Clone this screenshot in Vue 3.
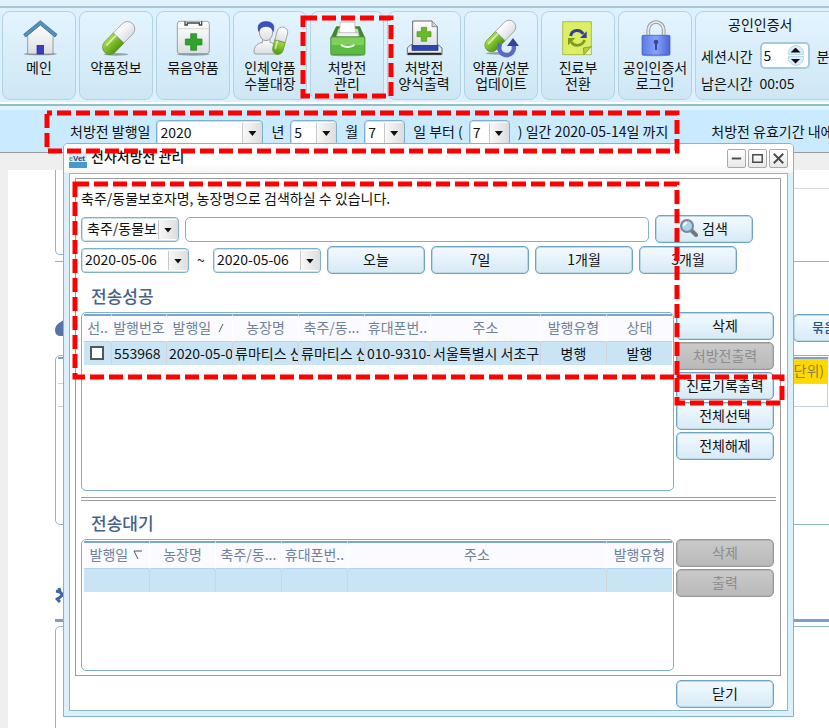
<template>
  <div class="app">
    <header class="toolbar">
      <button v-for="item in menu" :key="item.icon" type="button" class="tool">
        <svg class="tool-icon" viewBox="0 0 108 108" aria-hidden="true">
          <g v-if="item.icon === 'home'">
            <defs>
              <linearGradient id="green" x1="0" y1="0" x2="0" y2="1">
                <stop offset="0" stop-color="#a6dc3c" />
                <stop offset="1" stop-color="#4f9a10" />
              </linearGradient>
              <linearGradient id="white" x1="0" y1="0" x2="0" y2="1">
                <stop offset="0" stop-color="#ffffff" />
                <stop offset="1" stop-color="#dcdfe2" />
              </linearGradient>
              <linearGradient id="blue" x1="0" y1="0" x2="1" y2="0">
                <stop offset="0" stop-color="#5c79e0" />
                <stop offset="0.5" stop-color="#86a4fa" />
                <stop offset="1" stop-color="#4a66d4" />
              </linearGradient>
            </defs>
            <ellipse cx="58" cy="102" rx="50" ry="4" fill="#8fa3ae" />
            <path d="M20 46 58 12 96 46V102H20Z" fill="url(#white)" stroke="#777" stroke-width="2" />
            <rect x="48" y="76" width="20" height="26" fill="#3f3cc4" stroke="#28288c" stroke-width="2" />
            <path d="M58 2 108 43 102 51 58 15 14 51 8 43Z" fill="#4b94c6" stroke="#3c5566" stroke-width="2" />
          </g>
          <g v-else-if="item.icon === 'pill'">
            <ellipse cx="54" cy="103" rx="38" ry="4" fill="#8fa3ae" />
            <g transform="rotate(-46 62 54)">
              <path d="M62 32H24A22 22 0 0 0 24 76H62Z" fill="url(#green)" stroke="#5b8a22" stroke-width="2" />
              <path d="M62 32H100A22 22 0 0 1 100 76H62Z" fill="url(#white)" stroke="#888" stroke-width="2" />
              <path d="M22 43H60" stroke="#fff" stroke-width="6" stroke-linecap="round" opacity="0.6" />
            </g>
          </g>
          <g v-else-if="item.icon === 'bundle'">
            <ellipse cx="55" cy="103" rx="50" ry="4" fill="#8fa3ae" />
            <rect x="7" y="4" width="96" height="97" rx="8" fill="url(#white)" stroke="#777" stroke-width="2" />
            <path d="M8 26H102" stroke="#c4c8ca" stroke-width="2" />
            <path d="M30 4V15H37V9H73V15H80V4" fill="none" stroke="#444" stroke-width="4" />
            <path d="M47 41H65V57H81V75H65V91H47V75H31V57H47Z" fill="#2fa32b" stroke="#23801f" stroke-width="2" />
          </g>
          <g v-else-if="item.icon === 'person'">
            <path d="M6 96C6 76 18 70 32 67V55H54V67C68 70 78 80 78 102H14Q6 102 6 96Z" fill="url(#white)" stroke="#777" stroke-width="2" />
            <ellipse cx="42" cy="36" rx="20" ry="26" fill="url(#white)" stroke="#777" stroke-width="2" />
            <path d="M20 34C14 12 26 5 42 5S70 12 64 34L58 24Q42 14 26 24Z" fill="#3c50c4" stroke="#27368f" stroke-width="2" />
            <g transform="rotate(15 84 64)">
              <path d="M68 64V36A16 16 0 0 1 100 36V64Z" fill="url(#white)" stroke="#888" stroke-width="2" />
              <path d="M68 64V88A16 16 0 0 0 100 88V64Z" fill="url(#green)" stroke="#5b8a22" stroke-width="2" />
              <path d="M76 66V88" stroke="#fff" stroke-width="5" stroke-linecap="round" opacity="0.6" />
            </g>
          </g>
          <g v-else-if="item.icon === 'drawer'">
            <ellipse cx="56" cy="105" rx="52" ry="4" fill="#8fa3ae" />
            <path d="M22 20H92L107 54H6Z" fill="#3d8a2b" stroke="#2f6d21" stroke-width="2" />
            <path d="M28 26H86L92 48H22Z" fill="#cfd6d2" />
            <path d="M34 6H77L80 48H30Z" fill="#fff" stroke="#aaa" stroke-width="2" />
            <path d="M26 38H86L90 52H22Z" fill="#f2f4f2" stroke="#aaa" stroke-width="2" />
            <rect x="5" y="50" width="103" height="54" rx="4" fill="#5dbb3f" stroke="#3d8a2b" stroke-width="2" />
            <rect x="8" y="53" width="97" height="22" fill="#7fd05c" />
            <path d="M38 76Q56 86 74 76" fill="none" stroke="#f4fff0" stroke-width="6" stroke-linecap="round" />
          </g>
          <g v-else-if="item.icon === 'printer'">
            <path d="M14 74H96L108 84V104H4V84Z" fill="#e9ebee" stroke="#333" stroke-width="2" />
            <path d="M20 3H78L94 20V80H20Z" fill="url(#white)" stroke="#666" stroke-width="3" />
            <path d="M78 3V20H94" fill="#d4d7da" stroke="#666" stroke-width="2" />
            <path d="M46 22H62V35H75V50H62V64H46V50H33V35H46Z" fill="#6bb82a" stroke="#4b9214" stroke-width="2" />
            <rect x="18" y="76" width="78" height="15" fill="#2c45b4" stroke="#1a2a74" stroke-width="2" />
            <path d="M6 101H106" stroke="#222" stroke-width="6" />
          </g>
          <g v-else-if="item.icon === 'update'">
            <ellipse cx="44" cy="100" rx="36" ry="4" fill="#8fa3ae" />
            <g transform="rotate(-46 52 48)">
              <path d="M52 28H14A20 20 0 0 0 14 68H52Z" fill="url(#green)" stroke="#5b8a22" stroke-width="2" />
              <path d="M52 28H90A20 20 0 0 1 90 68H52Z" fill="url(#white)" stroke="#888" stroke-width="2" />
              <path d="M12 38H50" stroke="#fff" stroke-width="6" stroke-linecap="round" opacity="0.6" />
            </g>
            <path d="M52 72A22 22 0 1 0 92 78V72" fill="none" stroke="#5c69c8" stroke-width="13" />
            <path d="M90 54 108 78H72Z" fill="#35429c" />
          </g>
          <g v-else-if="item.icon === 'switch'">
            <path d="M8 5H94V80L72 104H8Z" fill="#dcee62" stroke="#8da32a" stroke-width="2" />
            <path d="M94 80 72 104 70 84Z" fill="#b6cc38" stroke="#6f8420" stroke-width="2" />
            <path d="M94 80V104H72Z" fill="#eef6b0" stroke="#8da32a" stroke-width="2" />
            <path d="M32 48C36 28 60 26 70 42" fill="none" stroke="#35409c" stroke-width="9" />
            <path d="M60 54H80V34Z" fill="#35409c" />
            <path d="M74 60C66 80 42 80 34 66" fill="none" stroke="#7d9a1c" stroke-width="8" />
            <path d="M24 76V54H46Z" fill="#7d9a1c" />
          </g>
          <g v-else>
            <ellipse cx="57" cy="106" rx="42" ry="3" fill="#8fa3ae" />
            <path d="M34 50V30A23 24 0 0 1 80 30V50" fill="none" stroke="#8b8f94" stroke-width="11" />
            <path d="M34 50V30A23 24 0 0 1 80 30V50" fill="none" stroke="#e2e4e6" stroke-width="6" />
            <rect x="15" y="46" width="84" height="59" rx="3" fill="url(#blue)" stroke="#4056b8" stroke-width="2" />
            <circle cx="57" cy="66" r="7" fill="#34489c" />
            <path d="M54 66H60V90H54Z" fill="#34489c" />
          </g>
        </svg>
        <span v-for="line in item.lines" :key="line">{{ line }}</span>
      </button>

      <div class="session">
        <p class="session-title">공인인증서</p>
        <div class="session-row">
          <label for="session-time">세션시간</label>
          <span class="spinner">
            <input id="session-time" v-model="sessionTime" type="text" />
            <span class="spinner-buttons">
              <button type="button" class="spin up" aria-label="증가" @click="sessionTime++"></button>
              <button type="button" class="spin down" aria-label="감소" @click="sessionTime--"></button>
            </span>
          </span>
          <span>분</span>
        </div>
        <div class="session-row session-left">
          <span>남은시간</span>
          <span>00:05</span>
        </div>
      </div>
    </header>

    <div class="filter">
      <label for="year">처방전 발행일</label>
      <span class="combo combo-year">
        <select id="year"><option>2020</option></select>
      </span>
      <label class="unit" for="month">년</label>
      <span class="combo combo-month">
        <select id="month"><option>5</option></select>
      </span>
      <label class="unit" for="day">월</label>
      <span class="combo combo-day">
        <select id="day"><option>7</option></select>
      </span>
      <label class="unit" for="span">일 부터 (</label>
      <span class="combo combo-day">
        <select id="span"><option>7</option></select>
      </span>
      <span class="unit">) 일간 2020-05-14일 까지</span>
      <span class="valid">처방전 유효기간 내에</span>
    </div>

    <main class="page">
      <div class="page-top">
        <div class="page-card"></div>
        <div class="page-side"></div>
      </div>
      <div class="page-line"></div>
      <div class="page-head">
        <svg class="drop" viewBox="0 0 20 20" aria-hidden="true">
          <path d="M12 0 20 8V18H6Q0 18 0 12Q0 8 4 5Z" fill="#5672a8" />
        </svg>
        <button type="button" class="btn page-btn">묶음약품</button>
      </div>
      <div class="page-grid">
        <div class="page-grid-head"><span>단위)</span></div>
        <div class="page-grid-row"></div>
      </div>
      <svg class="tools" viewBox="0 0 16 16" aria-hidden="true">
        <path d="M4 1 5 5 14 14M1 4 5 5M14 2 3 12M1 11 5 15" fill="none" stroke="#3a66a8" stroke-width="3" />
      </svg>
      <div class="page-bar"></div>
      <div class="page-box"></div>
    </main>

    <section class="dialog" role="dialog" aria-labelledby="dialog-title">
      <div class="titlebar">
        <svg class="logo" viewBox="0 0 18 16" aria-hidden="true">
          <rect width="18" height="16" fill="#dfeaf2" />
          <rect y="10" width="18" height="6" fill="#3f9bd0" />
          <text x="0" y="9" font-size="7" font-weight="700" fill="#6ba03a">e</text>
          <text x="4" y="9" font-size="8" font-weight="700" fill="#2d3d78">Vet</text>
        </svg>
        <h1 id="dialog-title">전자처방전 관리</h1>
        <button type="button" class="win" aria-label="최소화">
          <svg viewBox="0 0 18 18"><path d="M4 9H14" stroke="#4a4a4a" stroke-width="2" /></svg>
        </button>
        <button type="button" class="win" aria-label="최대화">
          <svg viewBox="0 0 18 18"><path d="M4 5H14V13H4Z" fill="none" stroke="#4a4a4a" stroke-width="1.5" /></svg>
        </button>
        <button type="button" class="win" aria-label="창 닫기">
          <svg viewBox="0 0 18 18"><path d="M4 4 14 14M14 4 4 14" stroke="#4a4a4a" stroke-width="2" /></svg>
        </button>
      </div>

      <div class="dialog-body">
        <div class="group">
          <p class="hint">축주/동물보호자명, 농장명으로 검색하실 수 있습니다.</p>

          <div class="search-row">
            <span class="combo combo-kind">
              <select aria-label="검색 구분"><option>축주/동물보호자명</option></select>
            </span>
            <input v-model="keyword" class="keyword" type="text" aria-label="검색어" />
            <button type="button" class="btn">
              <svg class="lens" viewBox="0 0 18 18" aria-hidden="true">
                <path d="M11 11 16 16" stroke="#777" stroke-width="4" stroke-linecap="round" />
                <circle cx="7" cy="7" r="6" fill="#a9d3ee" stroke="#7c8891" stroke-width="2" />
                <path d="M4 7A3 3 0 0 1 7 4" fill="none" stroke="#fff" stroke-width="2" />
              </svg>
              검색
            </button>
          </div>

          <div class="date-row">
            <div class="range">
              <span class="combo combo-date"><input v-model="dateFrom" type="text" aria-label="시작일" /></span>
              <span class="tilde">~</span>
              <span class="combo combo-date"><input v-model="dateTo" type="text" aria-label="종료일" /></span>
            </div>
            <button v-for="p in periods" :key="p" type="button" class="btn">{{ p }}</button>
          </div>

          <h2>전송성공</h2>
          <div class="list">
            <div class="table-box tall">
              <table>
                <colgroup>
                  <col v-for="c in sentColumns" :key="c.label" :style="{ width: c.width }" />
                </colgroup>
                <thead>
                  <tr>
                    <th v-for="c in sentColumns" :key="c.label">
                      {{ c.label }}
                      <svg v-if="c.sort" class="sort" viewBox="0 0 10 10"><path d="M3 9 7 1" stroke="#555" /></svg>
                    </th>
                  </tr>
                </thead>
                <tbody>
                  <tr>
                    <td><input type="checkbox" aria-label="선택" /></td>
                    <td>553968</td>
                    <td>2020-05-06</td>
                    <td>류마티스 신</td>
                    <td>류마티스 신</td>
                    <td>010-9310-</td>
                    <td>서울특별시 서초구</td>
                    <td class="center">병행</td>
                    <td class="center">발행</td>
                  </tr>
                </tbody>
              </table>
            </div>
            <div class="side">
              <button type="button" class="btn">삭제</button>
              <button type="button" class="btn" disabled>처방전출력</button>
              <button type="button" class="btn">진료기록출력</button>
              <button type="button" class="btn">전체선택</button>
              <button type="button" class="btn">전체해제</button>
            </div>
          </div>

          <hr />

          <h2>전송대기</h2>
          <div class="list">
            <div class="table-box short">
              <table>
                <colgroup>
                  <col v-for="c in waitColumns" :key="c.label" :style="{ width: c.width }" />
                </colgroup>
                <thead>
                  <tr>
                    <th v-for="c in waitColumns" :key="c.label">
                      {{ c.label }}
                      <svg v-if="c.sort" class="sort" viewBox="0 0 10 10"><path d="M9 1H1L5 9" fill="none" stroke="#555" /></svg>
                    </th>
                  </tr>
                </thead>
                <tbody>
                  <tr>
                    <td v-for="c in waitColumns" :key="c.label"></td>
                  </tr>
                </tbody>
              </table>
            </div>
            <div class="side">
              <button type="button" class="btn" disabled>삭제</button>
              <button type="button" class="btn" disabled>출력</button>
            </div>
          </div>
        </div>

        <div class="dialog-footer">
          <button type="button" class="btn">닫기</button>
        </div>
      </div>
    </section>

    <!-- red guide frames drawn over the screen -->
    <div v-for="m in marks" :key="m.name" class="mark" :class="m.name">
      <svg width="100%" height="100%" aria-hidden="true">
        <rect width="100%" height="100%" :stroke-dashoffset="m.offset" />
      </svg>
    </div>
  </div>
</template>

<script setup>
import { ref } from 'vue';

const sessionTime = ref(5);
const keyword = ref('');
const dateFrom = ref('2020-05-06');
const dateTo = ref('2020-05-06');

const menu = [
  { icon: 'home', lines: ['메인'] },
  { icon: 'pill', lines: ['약품정보'] },
  { icon: 'bundle', lines: ['묶음약품'] },
  { icon: 'person', lines: ['인체약품', '수불대장'] },
  { icon: 'drawer', lines: ['처방전', '관리'] },
  { icon: 'printer', lines: ['처방전', '양식출력'] },
  { icon: 'update', lines: ['약품/성분', '업데이트'] },
  { icon: 'switch', lines: ['진료부', '전환'] },
  { icon: 'lock', lines: ['공인인증서', '로그인'] },
];

const periods = ['오늘', '7일', '1개월', '3개월'];

const sentColumns = [
  { label: '선..', width: '28px' },
  { label: '발행번호', width: '55px' },
  { label: '발행일', width: '66px', sort: true },
  { label: '농장명', width: '66px' },
  { label: '축주/동...', width: '66px' },
  { label: '휴대폰번..', width: '66px' },
  { label: '주소', width: 'auto' },
  { label: '발행유형', width: '66px' },
  { label: '상태', width: '65px' },
];

const waitColumns = [
  { label: '발행일', width: '66px', sort: true },
  { label: '농장명', width: '66px' },
  { label: '축주/동...', width: '66px' },
  { label: '휴대폰번..', width: '66px' },
  { label: '주소', width: 'auto' },
  { label: '발행유형', width: '65px' },
];

const marks = [
  { name: 'mark-menu', offset: 0 },
  { name: 'mark-filter', offset: 9 },
  { name: 'mark-search', offset: 0 },
  { name: 'mark-print', offset: 0 },
];
</script>

<style>
body {
  margin: 0;
}
</style>

<style scoped>
.app {
  position: relative;
  display: flex;
  flex-direction: column;
  min-height: 100vh;
  overflow: hidden;
  background: #efefef;
  color: #111;
  font: 14px/16px "Noto Sans CJK KR", sans-serif;
}

.app * {
  box-sizing: border-box;
}

button,
input,
select {
  margin: 0;
  font: inherit;
  color: inherit;
}

p,
h1,
h2 {
  margin: 0;
}

/* toolbar */
.toolbar {
  display: flex;
  gap: 3px;
  height: 106px;
  padding: 3px 0 4px 2px;
  border-top: 6px solid #e0f3fd;
  border-bottom: 2px solid #93bdc8;
  background: #dcf1ff;
  box-shadow: inset 0 2px 0 #a9c6d1, inset 0 -2px 0 #fff;
  white-space: nowrap;
}

.tool {
  display: flex;
  flex: none;
  flex-direction: column;
  align-items: center;
  width: 74px;
  height: 89px;
  margin-top: 2px;
  padding: 8px 0 0;
  border: 1px solid #b4d3e2;
  border-radius: 8px;
  background: linear-gradient(#e3f4ff, #cee7f5);
}

.tool-icon {
  width: 36px;
  height: 36px;
  margin-bottom: 3px;
  overflow: visible;
}

.session {
  flex: none;
  width: 150px;
  height: 89px;
  margin-top: 2px;
  padding: 4px 5px 0;
  border: 1px solid #b4d3e2;
  border-radius: 8px;
  background: linear-gradient(#e3f4ff, #cee7f5);
}

.session-title {
  padding-left: 27px;
}

.session-row {
  display: flex;
  align-items: center;
  gap: 7px;
  height: 27px;
  margin-top: 10px;
}

.session-left {
  height: 16px;
  margin-top: 6px;
}

.spinner {
  display: flex;
  width: 50px;
  height: 27px;
  border: 2px solid #a3cadd;
  border-radius: 5px;
  background: #fff;
}

.spinner input {
  width: 26px;
  padding: 0 2px 2px;
  border: 0;
  background: none;
}

.spinner-buttons {
  display: flex;
  flex-direction: column;
  justify-content: center;
  gap: 1px;
}

.spin {
  display: flex;
  align-items: center;
  justify-content: center;
  width: 16px;
  height: 10px;
  padding: 0;
  border: 1px solid #b9d9e8;
  background: #d9edf7;
}

.spin::before {
  width: 10px;
  height: 5px;
  background: #111;
  clip-path: polygon(50% 0, 100% 100%, 0 100%);
  content: "";
}

.up {
  border-radius: 8px 8px 0 0;
}

.down {
  border-radius: 0 0 8px 8px;
}

.down::before {
  clip-path: polygon(0 0, 100% 0, 50% 100%);
}

/* filter bar */
.filter {
  display: flex;
  gap: 6px;
  height: 47px;
  padding: 10px 0 0 70px;
  border-top: 4px solid #e0f3fd;
  border-bottom: 1px solid #9a9a9a;
  background: #c9eaff;
  line-height: 22px;
  white-space: nowrap;
}

.filter label,
.filter span {
  flex: none;
}

.filter .unit {
  margin-left: 2px;
}

.filter .combo {
  height: 26px;
}

.filter .valid {
  margin-left: 37px;
}

.combo {
  position: relative;
  display: flex;
  height: 25px;
  border: 1px solid #7fb0cb;
  border-radius: 4px;
  background: #fff;
  box-shadow: inset 0 0 0 1px #cfe2ec;
}

.combo select,
.combo input {
  width: 100%;
  padding: 0 20px 2px 3px;
  border: 0;
  background: none;
  appearance: none;
}

/* arrow plate at the end of every drop-down */
.combo::before {
  position: absolute;
  top: 2px;
  right: 1px;
  bottom: 2px;
  width: 18px;
  border-left: 1px solid #c8c8c8;
  background: linear-gradient(90deg, #f8f8f8, #dedede);
  content: "";
  pointer-events: none;
}

.combo::after {
  position: absolute;
  top: 10px;
  right: 6px;
  width: 8px;
  height: 5px;
  background: #111;
  clip-path: polygon(0 0, 100% 0, 50% 100%);
  content: "";
  pointer-events: none;
}

.combo-year {
  width: 107px;
}

.combo-month {
  width: 47px;
}

.combo-day {
  width: 41px;
}

.combo-kind {
  width: 98px;
}

.combo.combo-kind select {
  padding-left: 5px;
}

.combo-date {
  width: 108px;
}

/* page behind the dialog */
.page {
  display: flex;
  flex: 1;
  flex-direction: column;
  margin: 17px 0 0 8px;
  padding-left: 47px;
  overflow: hidden;
  background: #fff;
}

.page-top {
  display: flex;
  height: 85px;
}

.page-card {
  width: 300px;
  border: 1px solid #8fb5cb;
  border-top: 0;
  border-radius: 0 0 5px 5px;
}

.page-side {
  flex: 1;
  margin-top: 18px;
  border-top: 1px solid #d8d8d8;
}

.page-line {
  height: 1px;
  margin-top: 6px;
  background: #8fb5cb;
}

.page-head {
  display: flex;
  align-items: center;
  justify-content: space-between;
  margin: 52px -62px 13px 0;
}

.drop {
  width: 20px;
  height: 20px;
}

.page-grid {
  height: 170px;
  margin-right: -10px;
  padding: 1px 10px 0 2px;
  border: 1px solid #8fb5cb;
  border-radius: 5px;
}

.page-grid-head {
  display: flex;
  justify-content: flex-end;
  height: 27px;
  border-top: 2px solid #7ba0cf;
  border-bottom: 1px solid #bcd6e8;
}

.page-grid-head span {
  width: 70px;
  padding-right: 4px;
  background: #ffd800;
  color: #8b8148;
  line-height: 22px;
  text-align: right;
}

.page-grid-row {
  height: 23px;
  border-right: 1px solid #ccc;
  border-bottom: 1px solid #c3d3de;
}

.tools {
  width: 16px;
  height: 16px;
  margin: 62px 0 16px;
}

.page-bar {
  height: 3px;
  background: #7ba0cf;
}

.page-box {
  flex: 1;
  min-height: 40px;
  margin: 4px -10px -10px 0;
  border: 1px solid #8fb5cb;
  border-radius: 5px;
}

/* dialog */
.dialog {
  position: absolute;
  top: 143px;
  right: 35px;
  left: 63px;
  border: 1px solid #84b5c8;
  border-radius: 5px 5px 0 0;
  background: #dbf0fb;
}

.titlebar {
  display: flex;
  gap: 2px;
  height: 29px;
  padding: 5px 5px 0;
  border-radius: 4px 4px 0 0;
  background: linear-gradient(#fff 70%, #f4f4f4);
}

.logo {
  width: 18px;
  height: 16px;
  margin-top: 3px;
  font-family: "Liberation Sans", sans-serif;
}

.titlebar h1 {
  flex: 1;
  padding-left: 2px;
  font-size: 14px;
  font-weight: 500;
  line-height: 14px;
}

.win {
  width: 19px;
  height: 19px;
  padding: 0;
  border: 1px solid #a9a9a9;
  border-radius: 2px;
  background: linear-gradient(#fff, #e8e8e8);
}

.win svg {
  display: block;
}

.dialog-body {
  margin: 0 5px 5px;
  padding: 4px 6px 2px 5px;
  border: 1px solid #8dbac9;
  background: #fff;
}

.group {
  padding: 9px 4px 4px 5px;
  border: 1px solid #9c9c9c;
}

.hint {
  line-height: 20px;
}

.btn {
  display: flex;
  flex: none;
  align-items: center;
  justify-content: center;
  width: 98px;
  height: 28px;
  padding: 0 0 2px;
  border: 1px solid #6fa3c4;
  border-radius: 5px;
  background: linear-gradient(#f4faff, #d6eaf6);
  box-shadow: inset 0 0 0 1px #b9d8e8;
  white-space: nowrap;
}

.btn:disabled {
  border-color: #999;
  background: linear-gradient(#cacaca, #b9b9b9);
  box-shadow: inset 0 0 0 1px #b2b2b2;
  color: #8c8c8c;
}

.page-btn {
  justify-content: flex-start;
  padding-left: 18px;
  color: #1f558e;
  font-size: 13px;
  font-weight: 500;
}

.search-row {
  display: flex;
  align-items: center;
  gap: 6px;
  margin-top: 7px;
  padding-right: 23px;
}

.keyword {
  flex: 1;
  min-width: 0;
  height: 25px;
  padding: 0 5px;
  border: 1px solid #7fb0cb;
  border-radius: 5px;
}

.lens {
  width: 18px;
  height: 18px;
  margin-right: 4px;
}

.date-row {
  display: flex;
  align-items: center;
  gap: 6px;
  margin-top: 3px;
}

.range {
  display: flex;
  align-items: center;
}

.tilde {
  width: 24px;
  text-align: center;
}

h2 {
  margin: 11px 0 5px 10px;
  color: #46618a;
  font-size: 17px;
  font-weight: 500;
  line-height: 22px;
}

.list {
  display: flex;
  gap: 2px;
  padding-right: 2px;
}

.side {
  display: flex;
  flex-direction: column;
  gap: 2px;
}

.table-box {
  flex: 1;
  min-width: 0;
  padding: 1px 1px 0 2px;
  border: 1px solid #7fb0cb;
  border-radius: 5px;
}

.tall {
  height: 179px;
}

.short {
  height: 132px;
}

table {
  width: 100%;
  border-collapse: separate;
  border-spacing: 0;
  table-layout: fixed;
}

th {
  height: 28px;
  padding: 0 0 3px;
  border-top: 2px solid #7ba5d4;
  border-right: 1px solid #fff;
  border-bottom: 1px solid #b5d4ee;
  background: #fafaff;
  color: #70829b;
  font-weight: 400;
  overflow: hidden;
  white-space: nowrap;
}

.sort {
  width: 10px;
  height: 10px;
  margin-left: 2px;
}

td {
  height: 23px;
  padding: 0 0 2px 2px;
  border-right: 1px solid #d3d3d9;
  background: #c8e4f5;
  overflow: hidden;
  white-space: nowrap;
}

th:last-child,
td:last-child {
  border-right: 0;
}

td.center {
  padding-left: 0;
  text-align: center;
}

td input {
  display: block;
  width: 14px;
  height: 14px;
  margin-left: 4px;
  border: 2px solid #555;
  background: #fff;
  appearance: none;
}

td input:checked {
  background: #555;
}

hr {
  height: 4px;
  margin: 6px 0 0;
  border: 0;
  border-top: 1px solid #9c9c9c;
  border-bottom: 1px solid #9c9c9c;
}

.dialog-footer {
  display: flex;
  justify-content: flex-end;
  margin-top: 4px;
  padding-right: 7px;
}

/* guide frames */
.mark {
  position: absolute;
  pointer-events: none;
}

.mark svg {
  display: block;
  overflow: visible;
}

.mark rect {
  fill: none;
  stroke: #fe0000;
  stroke-width: 5px;
  stroke-dasharray: 14 5;
}

.mark-menu {
  top: 18px;
  left: 303px;
  width: 88px;
  height: 78px;
}

.mark-filter {
  top: 113px;
  left: 47px;
  width: 630px;
  height: 38px;
}

.mark-search {
  top: 184px;
  right: 152px;
  left: 75px;
  height: 193px;
}

.mark-print {
  top: 377px;
  right: 47px;
  width: 105px;
  height: 26px;
}
</style>
